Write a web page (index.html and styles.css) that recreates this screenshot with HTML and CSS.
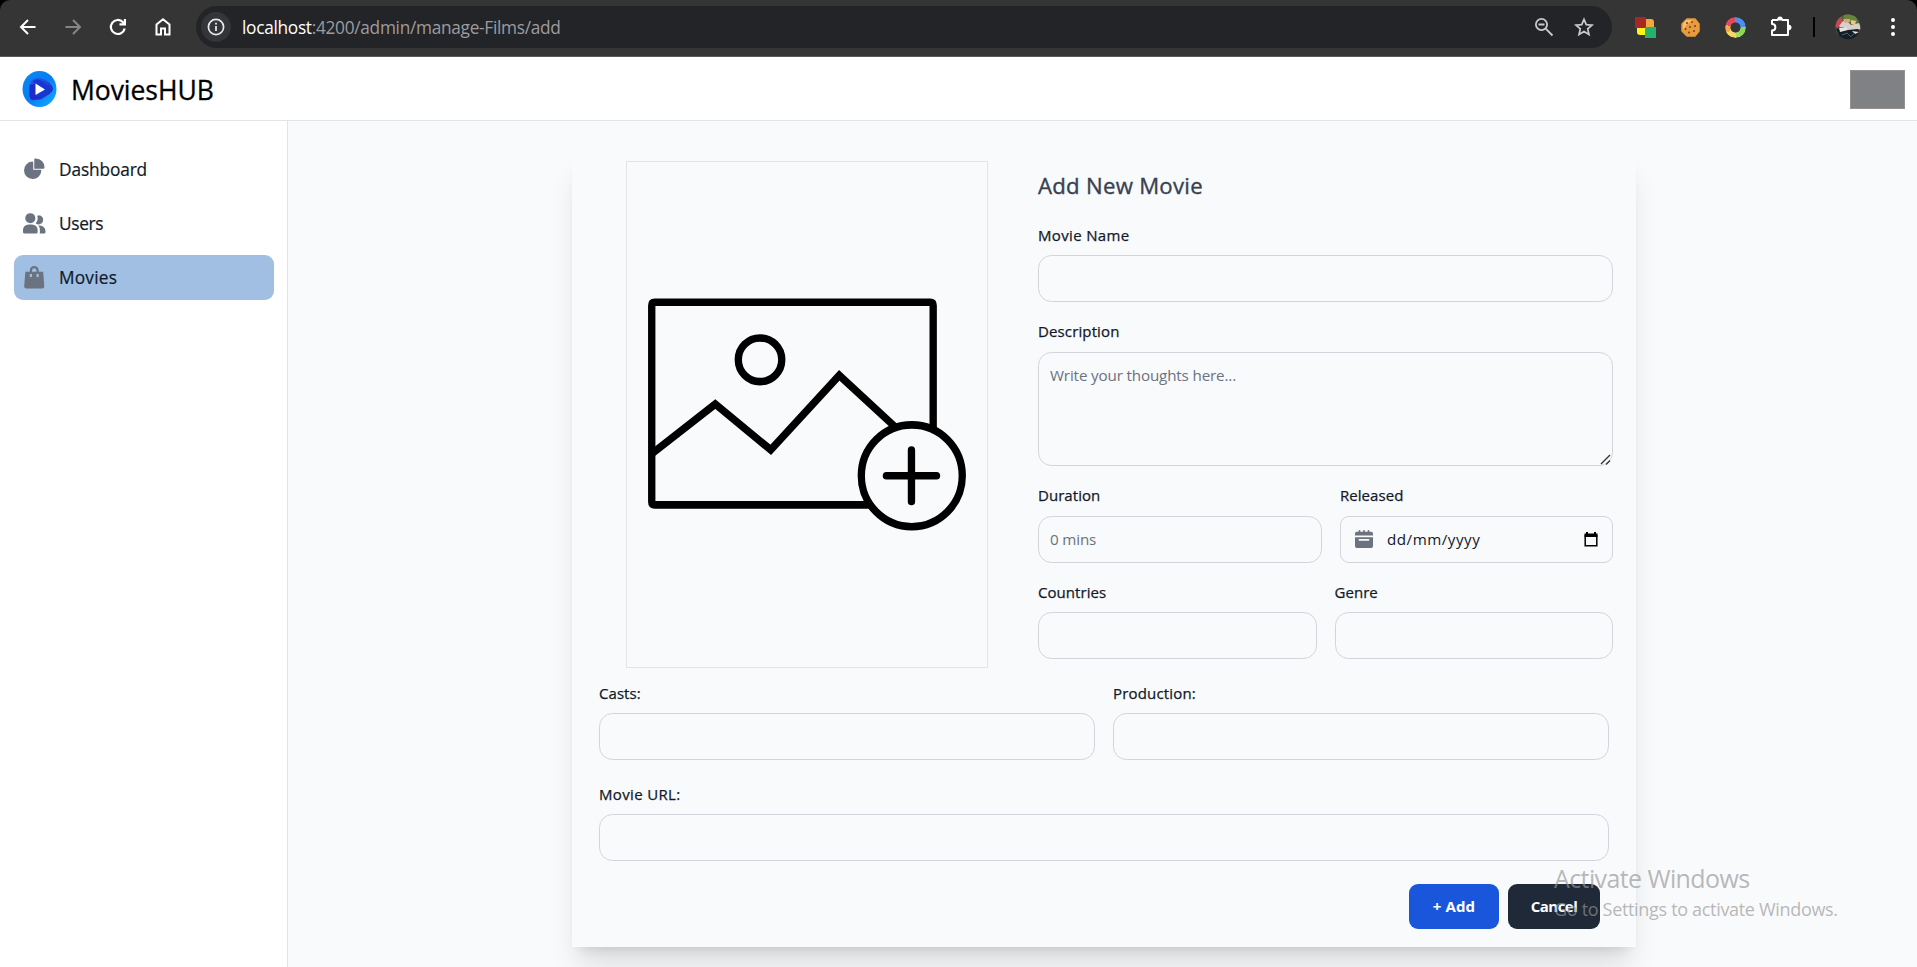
FILE: index.html
```html
<!DOCTYPE html>
<html lang="en">
<head>
<meta charset="utf-8">
<title>MoviesHUB</title>
<link rel="stylesheet" href="styles.css">
</head>
<body>
<div class="toolbar">
  <div class="nav-icons">
    <svg width="24" height="24" viewBox="0 0 24 24"><path d="M19.500 12H5.500M12 5l-7 7 7 7" fill="none" stroke="#fff" stroke-width="2"/></svg>
    <svg width="24" height="24" viewBox="0 0 24 24"><path d="M4.500 12H18.500M12 5l7 7-7 7" fill="none" stroke="#868686" stroke-width="2"/></svg>
    <svg width="24" height="24" viewBox="0 0 24 24"><path d="M18.700 13.500A7 7 0 1 1 17 7.200l2 2" fill="none" stroke="#fff" stroke-width="2.200"/><path d="M20 4v6.500h-6.500V8.300h4.300V4z" fill="#fff"/></svg>
    <svg width="24" height="24" viewBox="0 0 24 24"><path d="M5.500 19.500V9.500L12 4.300l6.500 5.200v10H14v-6h-4v6z" fill="none" stroke="#fff" stroke-width="2"/></svg>
  </div>
  <div class="address">
    <span class="info"><svg width="20" height="20" viewBox="0 0 20 20"><circle cx="10" cy="10" r="7.600" fill="none" stroke="#e6e6e6" stroke-width="1.700"/><path d="M10 9v5M10 5.800v1.800" stroke="#e6e6e6" stroke-width="1.800"/></svg></span>
    <span class="url"><b>localhost</b>:4200/admin/manage-Films/add</span>
    <span class="address-tools">
      <svg width="22" height="22" viewBox="0 0 22 22"><g fill="none" stroke="#c9cacd" stroke-width="1.800"><circle cx="8.500" cy="8.500" r="5.600"/><path d="M12.700 12.700L19.500 19.500M5.500 8.500h6"/></g></svg>
      <svg width="22" height="22" viewBox="0 0 22 22"><path d="M11 3.300l2.300 5.300 5.700.5-4.300 3.800 1.300 5.600-5-3-5 3 1.300-5.600L3 9.100l5.700-.5z" fill="none" stroke="#c9cacd" stroke-width="1.700"/></svg>
    </span>
  </div>
  <div class="extensions">
    <svg class="ext-blocks" width="21" height="21" viewBox="0 0 21 21"><rect width="11" height="11" fill="#a52825"/><path d="M11 2h5q3 0 3 3v5h-8z" fill="#f0a840"/><path d="M2 11h8v7H5q-3 0-3-3z" fill="#fcf21c"/><rect x="10" y="10" width="11" height="11" fill="#25b06c"/></svg>
    <svg class="ext-cookie" width="19" height="19" viewBox="0 0 19 19"><path d="M6 1l8 0 4 5 0 7-4 5-8 0-5-5 0-7z" fill="#e89b3e" stroke="#e89b3e" stroke-width="1.500" stroke-linejoin="round"/><path d="M5 2l7 0-6 4-4 6 0-6z" fill="#f8c26c"/><g fill="#77401d"><circle cx="6" cy="5" r="1"/><circle cx="11" cy="4" r=".9"/><circle cx="14" cy="8" r="1"/><circle cx="9" cy="9" r="1"/><circle cx="4.500" cy="11" r="1"/><circle cx="8" cy="14.500" r="1"/><circle cx="13" cy="13" r="1"/></g></svg>
    <span class="ext-wheel"></span>
    <svg class="ext-puzzle" width="22" height="22" viewBox="0 0 22 22"><path d="M2 4h6M12 4h6v15H2v-4.500c4.500 0 4.500-6.500 0-6.500V4" fill="none" stroke="#fff" stroke-width="2" stroke-linejoin="round"/><path d="M7 4.500q0-4 3-4t3 4zM17.500 8.500q4 0 4 3t-4 3z" fill="#fff"/></svg>
    <span class="divider"></span>
    <svg class="avatar" width="26" height="26" viewBox="0 0 26 26"><defs><clipPath id="face"><circle cx="13" cy="13" r="12.500"/></clipPath></defs><g clip-path="url(#face)"><rect width="26" height="26" fill="#4d5f43"/><path d="M0 5l6-2 2 5-5 6-3-2z" fill="#c74852"/><path d="M8 0h12l3 8-7 1-7-3z" fill="#66853b"/><path d="M4 12l4-5 5 1 3 3 8-2 2 6-7 1-8 2z" fill="#d8cfc9"/><path d="M8 5h7v3l-5 1z" fill="#dda47c"/><path d="M16 6l5 1-1 4-4-1z" fill="#edc58a"/><path d="M1 15l7-2 5 3 10-1 3 5-8 6H6z" fill="#151e26"/><path d="M4 14l7-1 2 3-8 2zM17 17l7 1-4 2z" fill="#e5e3e5"/><path d="M7 21l5-2 3 3M15 23l5-4" stroke="#4c6171" fill="none"/></g></svg>
    <svg class="more" width="6" height="22" viewBox="0 0 6 22"><g fill="#fff"><circle cx="3" cy="4" r="2"/><circle cx="3" cy="11" r="2"/><circle cx="3" cy="18" r="2"/></g></svg>
  </div>
</div>

<header class="header">
  <svg class="logo" width="35" height="36" viewBox="0 0 35 36"><defs><linearGradient id="lg" x1="0" y1="0" x2="1" y2="1"><stop offset="0" stop-color="#078cf4"/><stop offset=".5" stop-color="#087bf5"/><stop offset="1" stop-color="#12b4fa"/></linearGradient><linearGradient id="lg2" x1="0" y1="0" x2="1" y2="1"><stop offset="0" stop-color="#2368ee"/><stop offset="1" stop-color="#1a20b8"/></linearGradient></defs><ellipse cx="17.500" cy="18" rx="17" ry="18" fill="url(#lg)"/><path d="M7.500 15q0-8 8-8 6 0 12 5 7 6 0 11l-8 5q-4 2-5-1v-15q-4 0-4 6v12q-3-2-3-5z" fill="url(#lg2)"/><path d="M7.500 14v10q0 5 5 5 3 0 6-2l-4-3V12z" fill="#1b2cc8"/><path d="M10 11q4-5 10-1l6 5q3 3-1 6l-7 5q-4 2-4-3V13z" fill="#1836d4"/><path d="M13.500 12.500v11.500l9.500-5.600z" fill="#fff"/></svg>
  <span class="brand">MoviesHUB</span>
  <span class="profile"></span>
</header>

<div class="body">
  <aside class="sidebar">
    <a class="item"><svg viewBox="0 0 22 21"><path d="M16.975 11H10V4.025a1 1 0 0 0-1.066-.998 8.500 8.500 0 1 0 9.039 9.039.999.999 0 0 0-1-1.066h.002Z"/><path d="M12.500 0c-.157 0-.311.010-.565.027A1 1 0 0 0 11 1.020V10h8.975a1 1 0 0 0 1-.935c.013-.188.028-.374.028-.565A8.510 8.510 0 0 0 12.500 0Z"/></svg><span class="dash">Dashboard</span></a>
    <a class="item"><svg viewBox="0 0 20 18"><path d="M14 2a3.963 3.963 0 0 0-1.400.267 6.439 6.439 0 0 1-1.331 6.638A4 4 0 1 0 14 2Zm1 9h-1.264A6.957 6.957 0 0 1 15 15v2a2.970 2.970 0 0 1-.184 1H19a1 1 0 0 0 1-1v-1a5.006 5.006 0 0 0-5-5ZM6.500 9a4.500 4.500 0 1 0 0-9 4.500 4.500 0 0 0 0 9ZM8 10H5a5.006 5.006 0 0 0-5 5v2a1 1 0 0 0 1 1h11a1 1 0 0 0 1-1v-2a5.006 5.006 0 0 0-5-5Z"/></svg><span class="users">Users</span></a>
    <a class="item active"><svg viewBox="0 0 18 20"><path d="M17 5.923A1 1 0 0 0 16 5h-3V4a4 4 0 1 0-8 0v1H2a1 1 0 0 0-1 .923L.086 17.846A2 2 0 0 0 2.080 20h13.840a2 2 0 0 0 1.994-2.153L17 5.923ZM7 9a1 1 0 0 1-2 0V7h2v2Zm0-5a2 2 0 1 1 4 0v1H7V4Zm6 5a1 1 0 1 1-2 0V7h2v2Z"/></svg><span class="movies">Movies</span></a>
  </aside>

  <main class="main">
    <form class="card">
      <div class="top">
        <div class="poster">
          <svg viewBox="203 67 1077 1458" preserveAspectRatio="none"><g fill="none" stroke="#000" stroke-width="22"><path d="M1119 832V481q0-9-9-9H286q-9 0-9 9v567q0 9 9 9h646"/><path d="M279 908L467 766l166 132L838 683l165 147"/><ellipse cx="601" cy="638" rx="65" ry="63"/><ellipse cx="1055" cy="973" rx="151" ry="147"/><path d="M979 973h150M1054 899v148" stroke-linecap="round"/></g></svg>
        </div>
        <div class="details">
          <h2>Add New Movie</h2>
          <div class="field"><label class="name">Movie Name</label><input type="text"></div>
          <div class="field"><label class="desc">Description</label>
            <div class="area"><textarea placeholder="Write your thoughts here..."></textarea><svg class="grip" width="11" height="11" viewBox="0 0 11 11"><path d="M1 10L10 1M6 10.500l4-4" stroke="#333" stroke-width="1.400"/></svg></div>
          </div>
          <div class="row dur">
            <div class="field"><label>Duration</label><input type="text" placeholder="0 mins"></div>
            <div class="field"><label>Released</label>
              <div class="date"><svg class="cal" viewBox="0 0 20 20"><path d="M20 4a2 2 0 0 0-2-2h-2V1a1 1 0 0 0-2 0v1h-3V1a1 1 0 0 0-2 0v1H6V1a1 1 0 0 0-2 0v1H2a2 2 0 0 0-2 2v2h20V4ZM0 18a2 2 0 0 0 2 2h16a2 2 0 0 0 2-2V8H0v10Zm5-8h10a1 1 0 0 1 0 2H5a1 1 0 0 1 0-2Z"/></svg><span>dd/mm/yyyy</span><svg class="pick" width="14" height="15" viewBox="0 0 14 15"><path d="M1.200 3v10.800h11.600V3" fill="none" stroke="#000" stroke-width="1.500"/><path d="M.5 1.500H2V0h2v1.500h6V0h2v1.500h1.500V5H.5z"/></svg></div>
            </div>
          </div>
          <div class="row half">
            <div class="field"><label>Countries</label><input type="text"></div>
            <div class="field"><label>Genre</label><input type="text"></div>
          </div>
        </div>
      </div>
      <div class="lower">
        <div class="row half">
          <div class="field"><label>Casts:</label><input type="text"></div>
          <div class="field"><label class="prod">Production:</label><input type="text"></div>
        </div>
        <div class="field"><label class="link">Movie URL:</label><input type="text"></div>
      </div>
      <div class="actions">
        <button type="button" class="add">+ Add</button>
        <button type="button" class="cancel">Cancel</button>
      </div>
    </form>
  </main>
</div>
<div class="watermark"><p class="w1">Activate Windows</p><p class="w2">Go to Settings to activate Windows.</p></div>
</body>
</html>
```
FILE: styles.css
```css
* { box-sizing: border-box; }
html { background: #000; }
body {
  margin: 0;
  height: 967px;
  overflow: hidden;
  display: flex;
  flex-direction: column;
  font-family: "Open Sans", "Noto Sans", sans-serif;
  color: #111928;
}
svg { display: block; flex: none; }

.toolbar {
  height: 57px;
  flex: none;
  display: flex;
  align-items: center;
  padding: 0 21px 2px 16px;
  background: #353535;
  border-bottom: 1px solid #5c5a5a;
  border-radius: 10px 10px 0 0;
}
.nav-icons { display: flex; gap: 21px; width: 180px; flex: none; }
.address {
  width: 1416px;
  flex: none;
  height: 42px;
  border-radius: 21px;
  background: #232427;
  display: flex;
  align-items: center;
  padding: 0 17px 0 5px;
}
.info {
  width: 30px;
  height: 30px;
  border-radius: 50%;
  background: #343538;
  display: flex;
  align-items: center;
  justify-content: center;
}
.url { margin-left: 11px; font-size: 17.300px; letter-spacing: -0.300px; color: #9b9c9f; white-space: nowrap; }
.url b { font-weight: 400; color: #fff; }
.address-tools { margin-left: auto; display: flex; gap: 18px; }
.extensions { display: flex; align-items: center; margin-left: 23px; }
.ext-cookie { margin-left: 25px; }
.ext-wheel {
  margin-left: 25px;
  width: 21px;
  height: 21px;
  border-radius: 50%;
  background: conic-gradient(#4d8fee 0 90deg, #8cd65a 90deg 150deg, #a5dc62 150deg 180deg, #f6d766 180deg 240deg, #efaa4f 240deg 285deg, #e3495d 285deg 360deg);
  -webkit-mask: radial-gradient(circle, transparent 4.800px, #000 5.300px);
  mask: radial-gradient(circle, transparent 4.800px, #000 5.300px);
}
.ext-puzzle { margin-left: 24px; }
.divider { width: 2px; height: 20px; margin-left: 21px; background: #000; }
.avatar { margin-left: 20px; }
.more { margin-left: 29px; }

.header {
  height: 64px;
  flex: none;
  display: flex;
  align-items: center;
  padding: 1px 12px 0 22px;
  background: #fff;
  border-bottom: 1px solid #e2e4e8;
}
.brand { margin-left: 14px; padding-top: 2px; font-size: 26.500px; line-height: 36px; color: #000; letter-spacing: -0.050px; -webkit-text-stroke: 0.300px #000; }
.profile { margin-left: auto; width: 55px; height: 39px; background: #808184; border: 1px solid #96928f; }

.body { flex: 1; display: flex; min-height: 0; }
.sidebar {
  width: 288px;
  flex: none;
  padding: 26px 13px 0 14px;
  background: #fff;
  border-right: 1px solid #e2e4e8;
  display: flex;
  flex-direction: column;
  gap: 9px;
}
.item {
  height: 45px;
  display: flex;
  align-items: center;
  gap: 13.500px;
  padding-left: 9px;
  border-radius: 9px;
  font-size: 17.300px;
  -webkit-text-stroke: 0.200px #111928;
}
.item svg { width: 22.500px; height: 22.500px; fill: #6b7280; -webkit-text-stroke: 0; }
.dash { letter-spacing: -0.130px; }
.users { letter-spacing: -0.350px; }
.movies { letter-spacing: 0.200px; }
.active { background: #a0bfe2; }

.main { flex: 1; padding: 31px 0 0 284px; background: #f9fafc; }
.card {
  width: 1064px;
  height: 795px;
  padding-top: 9px;
  background: #f9fafc;
  box-shadow: 0 22.500px 28px -5.600px rgba(0,0,0,.12), 0 9px 11px -6.700px rgba(0,0,0,.12);
  display: flex;
  flex-direction: column;
}
.top { height: 498px; display: flex; align-items: flex-start; padding: 0 23px 0 54px; }
.poster { width: 362px; height: 507px; border: 1px solid #e2e4e8; }
.poster svg { width: 100%; height: 100%; }
.details { width: 575px; margin-left: 50px; padding-top: 9px; display: flex; flex-direction: column; gap: 18px; }
h2 { margin: 0 0 4px; height: 31.500px; line-height: 31.500px; font-size: 22.200px; letter-spacing: 0.260px; font-weight: 400; color: #374151; -webkit-text-stroke: 0.350px #374151; }
.field { display: flex; flex-direction: column; gap: 9px; min-width: 0; }
label { height: 22.500px; line-height: 22.500px; font-size: 15px; white-space: nowrap; letter-spacing: 0.050px; -webkit-text-stroke: 0.250px #111928; }
.name, .link { letter-spacing: 0.350px; }
.desc { letter-spacing: 0.130px; }
.prod { letter-spacing: 0.170px; }
input, textarea, .date {
  width: 100%;
  height: 47px;
  margin: 0;
  padding: 11px;
  border: 1px solid #d1d5db;
  border-radius: 13.500px;
  background: #f9fafc;
  font: 15.200px/22.500px "Open Sans", "Noto Sans", sans-serif;
  letter-spacing: -0.150px;
}
.area { position: relative; }
textarea { display: block; height: 114px; resize: none; }
.grip { position: absolute; right: 2px; bottom: 1px; }
::placeholder { color: #6b7280; opacity: 1; }
.date { display: flex; align-items: center; border-radius: 9px; padding: 0 14px 0 14px; letter-spacing: 0.500px; }
.cal { width: 18px; height: 18px; fill: #6b7280; margin-right: 14px; }
.pick { margin-left: auto; }
.row { display: grid; gap: 18px; }
.dur { grid-template-columns: 284px 273px; padding-top: 0.500px; }
.half { grid-template-columns: 1fr 1fr; }
.lower { padding: 22px 27px 0; display: flex; flex-direction: column; gap: 22.500px; }
.lower label { height: 22px; line-height: 23px; padding-top: 1px; }
.lower .field { gap: 9.500px; }
.actions { display: flex; justify-content: flex-end; gap: 9px; padding: 23px 36px 0 0; }
button {
  height: 45px;
  border: 0;
  border-radius: 9px;
  padding: 0;
  color: #fff;
  font: 700 15px "Open Sans", "Noto Sans", sans-serif;
  letter-spacing: -0.500px;
}
.add { width: 90px; background: #1a56db; letter-spacing: 0.100px; }
.cancel { width: 92px; background: #1f2937; }

.watermark { position: absolute; left: 1554px; top: 858px; color: rgba(150,150,150,.68); white-space: nowrap; }
.watermark p { margin: 0; }
.w1 { font-size: 25px; line-height: 40px; letter-spacing: -0.600px; }
.w2 { font-size: 18px; line-height: 22px; letter-spacing: -0.320px; }
```
